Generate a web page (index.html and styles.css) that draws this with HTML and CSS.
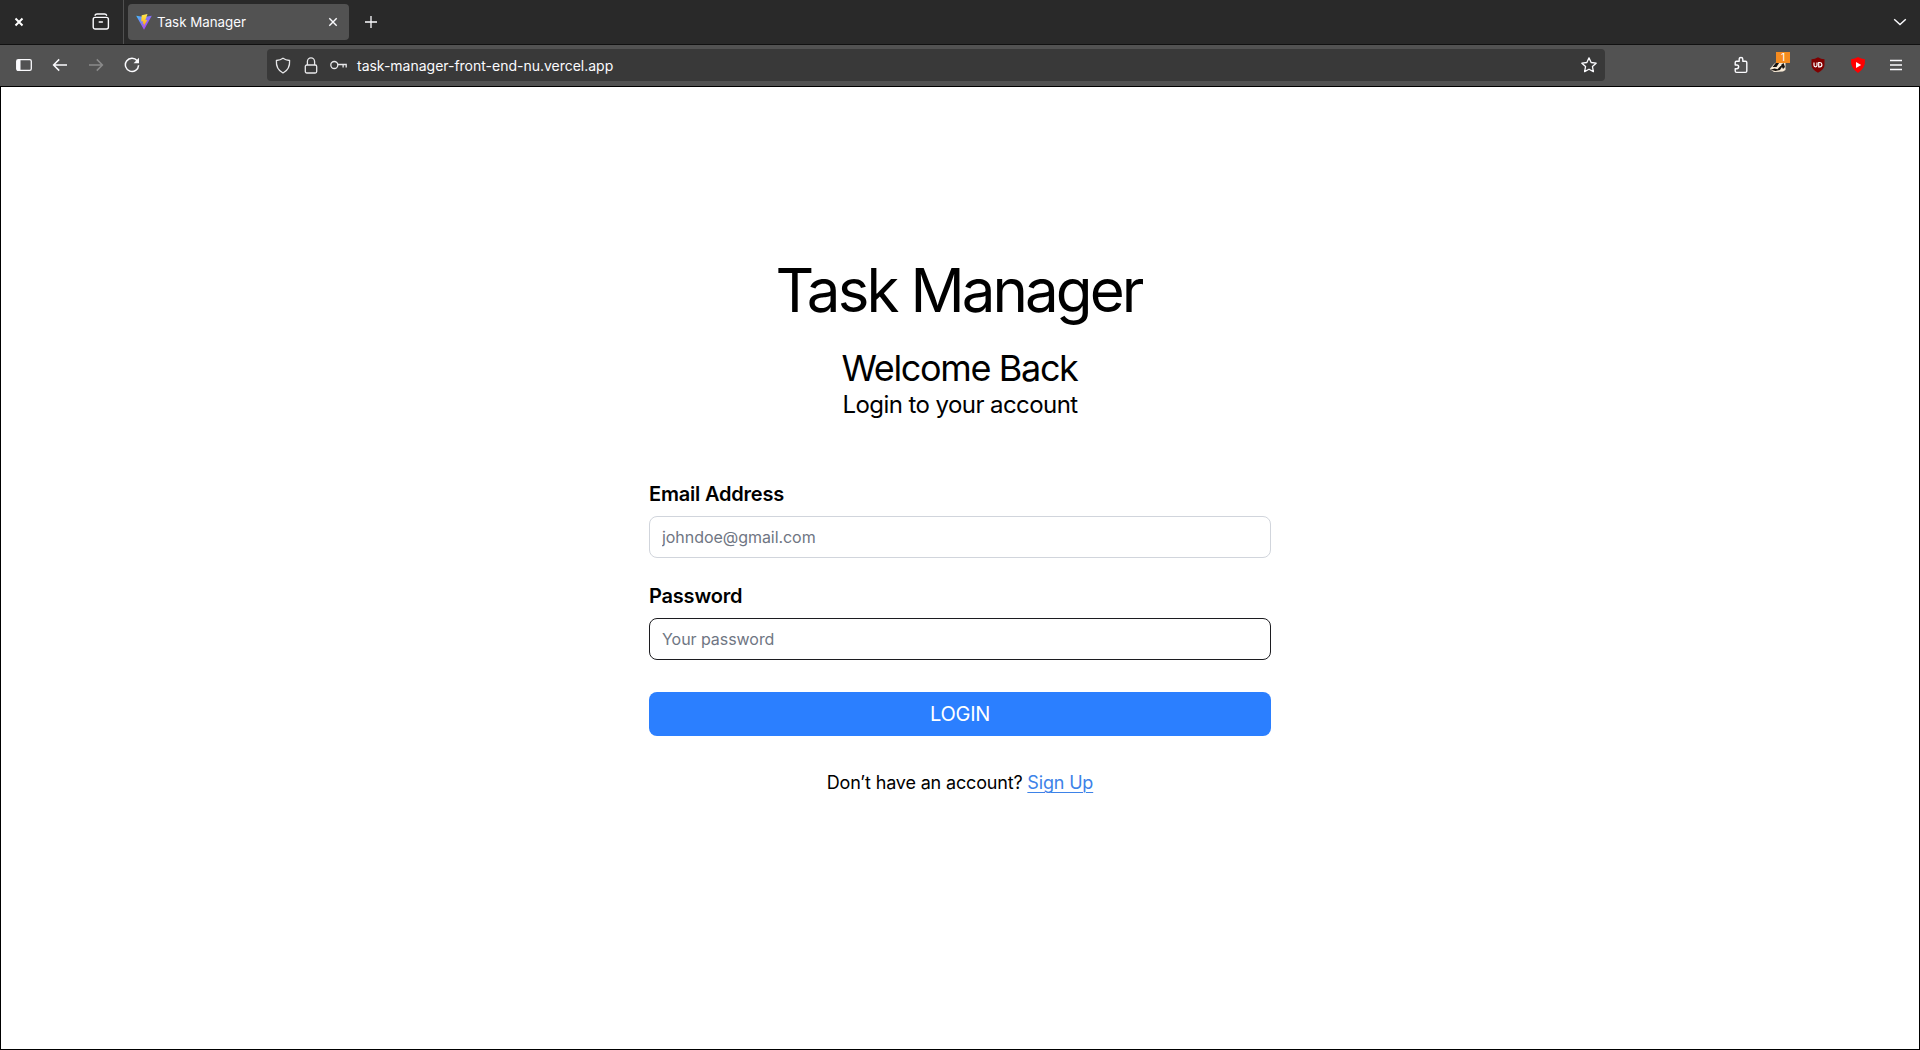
FILE: index.html
```html
<!DOCTYPE html>
<html lang="en">
<head>
<meta charset="utf-8">
<title>Task Manager</title>
<link rel="stylesheet" href="styles.css">
</head>
<body>
<div class="window">
  <header class="tabbar">
    <svg class="close-window" width="10" height="10" viewBox="0 0 10 10"><path d="M1.5 1.5l7 7m0-7l-7 7" fill="none" stroke="#fff" stroke-width="2"/></svg>
    <svg class="recent" width="18" height="18" viewBox="0 0 18 18" fill="none" stroke="#fbfbfe" stroke-width="1.4" stroke-linecap="round"><path d="M3 2.200Q3.400 1 5 1h7.600q1.600 0 2 1.200"/><rect x="1.200" y="4.400" width="15.200" height="11.600" rx="2"/><path d="M7.200 9h3.200"/></svg>
    <div class="divider"></div>
    <div class="tab">
      <svg width="16" height="16" viewBox="0 0 16 16"><defs><linearGradient id="va" x1="0" y1="0" x2="1" y2="1"><stop offset="0" stop-color="#41bffa"/><stop offset=".7" stop-color="#a44df6"/><stop offset="1" stop-color="#b040ff"/></linearGradient><linearGradient id="vb" x1="0" y1="0" x2="0" y2="1"><stop offset="0" stop-color="#ffe94f"/><stop offset="1" stop-color="#ffa30a"/></linearGradient></defs><path d="M.2 1.700L8 15.700l7.800-14L8.200 3z" fill="url(#va)"/><path d="M11.500.1L5.700 1.200l-.5 6.400 2-.4-.6 2.700 1.600-.4-.9 3.500 4-7-2 .3z" fill="url(#vb)"/></svg>
      <span class="tab-title">Task Manager</span>
      <svg class="tab-close" width="10" height="10" viewBox="0 0 10 10"><path d="M1.300 1.300l7.400 7.400m0-7.400L1.300 8.700" fill="none" stroke="#fbfbfe" stroke-width="1.400"/></svg>
    </div>
    <svg class="new-tab" width="14" height="14" viewBox="0 0 14 14"><path d="M7 1v12M1 7h12" fill="none" stroke="#fbfbfe" stroke-width="1.300"/></svg>
    <svg class="all-tabs" width="14" height="8" viewBox="0 0 14 8"><path d="M1.200 1.200L7 6.600l5.800-5.400" fill="none" stroke="#fbfbfe" stroke-width="1.400"/></svg>
  </header>
  <nav class="toolbar">
    <div class="nav-buttons">
      <svg width="16" height="16" viewBox="0 0 16 16"><rect x=".7" y="2.600" width="14.600" height="10.800" rx="1.600" fill="none" stroke="#fbfbfe" stroke-width="1.300"/><path d="M1 3h3.500v10H1z" fill="#fbfbfe"/></svg>
      <svg width="16" height="16" viewBox="0 0 16 16" fill="none" stroke="#fbfbfe" stroke-width="1.500"><path d="M15 8H1.800M7.200 2.400L1.600 8l5.600 5.600"/></svg>
      <svg width="16" height="16" viewBox="0 0 16 16" fill="none" stroke="#8a8a8a" stroke-width="1.500"><path d="M1 8h13.200M8.800 2.400L14.400 8l-5.600 5.600"/></svg>
      <svg width="16" height="16" viewBox="0 0 16 16"><path d="M13.200 3.800A6.600 6.600 0 1 0 14.600 8.200" fill="none" stroke="#fbfbfe" stroke-width="1.500"/><path d="M15 .8v5.400H9.600z" fill="#fbfbfe"/></svg>
    </div>
    <div class="urlbar">
      <svg width="16" height="17" viewBox="0 0 16 17" fill="none" stroke="#e8e8ea" stroke-width="1.300" stroke-linejoin="round"><path d="M8 1.200Q10.500 3 14.600 3.500C15 9.500 12 14 8 16 4 14 1 9.500 1.400 3.500Q5.500 3 8 1.200z"/></svg>
      <svg width="14" height="17" viewBox="0 0 14 17" fill="none" stroke="#e8e8ea" stroke-width="1.300"><rect x="1.300" y="8" width="11.400" height="8" rx="1.500"/><path d="M3.400 8V4.500a3.600 3.600 0 0 1 7.200 0V8"/></svg>
      <svg class="key" width="17" height="10" viewBox="0 0 17 10" fill="none" stroke="#e8e8ea" stroke-width="1.300"><circle cx="4.300" cy="5" r="3.500"/><path d="M7.800 4.500h8.400v3M13.100 4.500v3"/></svg>
      <span class="url">task-manager-front-end-nu.vercel.app</span>
      <svg class="star" width="16" height="16" viewBox="0 0 16 16" fill="none" stroke="#fbfbfe" stroke-width="1.300" stroke-linejoin="round"><path d="M8 .9l2.150 4.600 5 .650-3.700 3.450.950 5L8 12.200l-4.400 2.400.950-5L.850 6.150l5-.650z"/></svg>
    </div>
    <div class="extensions">
      <svg width="16" height="18" viewBox="0 0 16 18" fill="none" stroke="#fbfbfe" stroke-width="1.400" stroke-linejoin="round"><path d="M2.200 6.500q0-1.300 1.300-1.300h2.700V3.300a1.800 1.800 0 0 1 3.600 0v1.900h2.700q1.300 0 1.300 1.300v8.600q0 1.300-1.300 1.300h-9q-1.300 0-1.300-1.300v-2.400h1.600a1.800 1.800 0 0 0 0-3.700H2.200z"/></svg>
      <span class="badger">
        <svg width="18" height="18" viewBox="0 0 18 18"><path d="M.8 13L5 8l6-4.500L16.500 7v7l-2.500 1.500-9 .5z" fill="#f8ead6"/><path d="M3.500 11L8 5.500h3L7.500 11zM1.500 13.800l4-1.300 3 .8 3-3.300 2 .3-2.500 3.700-4.500 1zM12 9l2.500-2 1.500 4-2 2z" fill="#171310"/></svg>
        <span class="badge">1</span>
      </span>
      <span class="ublock"><svg width="16" height="16" viewBox="0 0 16 16"><path d="M8 .3Q11 2.300 14.500 2.300V8q0 4.500-6.500 7.700Q1.500 12.500 1.500 8V2.300Q5 2.300 8 .3z" fill="#800000"/><path d="M4 5.500v2.800q0 1.500 1.500 1.500T7 8.300V5.500M8.700 5.500v4.300h1.200q2-.1 2-2.100t-2-2.200z" fill="none" stroke="#fff" stroke-width="1.200"/></svg></span>
      <svg width="18" height="18" viewBox="0 0 18 18"><path d="M9 1Q12 2.800 16 3.300 16.600 12.500 9 17 1.400 12.500 2 3.300 6 2.800 9 1z" fill="#f00"/><path d="M7 6l5.200 3L7 12z" fill="#fff"/></svg>
      <svg width="14" height="14" viewBox="0 0 14 14"><path d="M1 2.500h12M1 7h12M1 11.500h12" stroke="#fbfbfe" stroke-width="1.300"/></svg>
    </div>
  </nav>
  <main class="page">
    <h1 class="title">Task Manager</h1>
    <h2 class="welcome">Welcome Back</h2>
    <p class="subtitle">Login to your account</p>
    <form class="form">
      <label class="label" for="email">Email Address</label>
      <input class="input" id="email" type="email" placeholder="johndoe@gmail.com">
      <label class="label" for="password">Password</label>
      <input class="input input-active" id="password" type="password" placeholder="Your password">
      <button class="login" type="button">LOGIN</button>
    </form>
    <p class="signup">Don’t have an account? <a class="link" href="#">Sign Up</a></p>
  </main>
</div>
</body>
</html>
```

FILE: styles.css
```css
* { box-sizing: border-box; margin: 0; padding: 0; }
body { font-family: Inter, sans-serif; color: #000; overflow: hidden; }
svg { display: block; flex: none; }
.window { display: flex; flex-direction: column; height: 1050px; }

.tabbar { display: flex; align-items: center; height: 45px; background: #292929; border-bottom: 1px solid #111; }
.close-window { margin-left: 14px; }
.recent { margin-left: 68px; }
.divider { width: 1px; height: 44px; margin-left: 13px; background: #505050; }
.tab { display: flex; align-items: center; width: 221px; height: 36px; margin-left: 4px; padding: 0 11px 0 8px; border-radius: 4px; background: #525252; }
.tab-title { margin-left: 5px; font-size: 13.33px; line-height: 16px; padding-bottom: 1px; color: #fbfbfe; white-space: nowrap; }
.tab-close { margin-left: auto; }
.new-tab { margin-left: 15px; }
.all-tabs { margin: 0 13px 0 auto; }

.toolbar { display: flex; align-items: center; height: 42px; padding-bottom: 1px; background: #525252; border-bottom: 1px solid #000; }
.nav-buttons { display: flex; gap: 20px; width: 267px; padding-left: 16px; }
.urlbar { display: flex; align-items: center; width: 1338px; height: 32px; padding: 0 8px; border-radius: 4px; background: #393939; }
.urlbar svg + svg { margin-left: 13px; }
.urlbar .key { margin-left: 12px; }
.url { margin-left: 10px; font-size: 14px; letter-spacing: -0.01px; color: #fbfbfe; }
.star { margin-left: auto; }
.extensions { display: flex; align-items: center; margin: 0 17px 0 auto; }
.badger { position: relative; margin: 0 1px 0 20px; }
.badge { position: absolute; left: 7px; top: -4px; width: 14px; height: 11px; background: #f58b1f; color: #fff; font-size: 10px; line-height: 11px; text-align: center; }
.ublock { margin-left: 22px; }
.ublock + svg { margin-left: 23px; }
.ublock + svg + svg { margin-left: 22px; }

.page { display: flex; flex: 1; flex-direction: column; align-items: center; padding-top: 173px; border: solid #000; border-width: 0 1px 1px; background: #fff; }
.title { padding-right: 3px; font-size: 60px; line-height: 60px; font-weight: 400; letter-spacing: -2.9px; }
.welcome { margin-top: 28px; padding-right: 1px; font-size: 36px; line-height: 40px; font-weight: 400; letter-spacing: -1.35px; }
.subtitle { margin-top: 1px; font-size: 24px; line-height: 32px; letter-spacing: -0.57px; }
.form { display: flex; flex-direction: column; width: 622px; margin-top: 59px; }
.label { margin-bottom: 8px; font-size: 20px; line-height: 28px; font-weight: 600; letter-spacing: -0.2px; }
.input { height: 42px; margin-bottom: 24px; padding: 0 12px; border: 1px solid #d1d5dc; border-radius: 8px; background: #fff; font: 16px/24px Inter, sans-serif; letter-spacing: -0.05px; }
.input::placeholder { color: #6f7683; opacity: 1; }
.input-active { margin-bottom: 32px; border-color: #1c1c20; }
.login { height: 44px; border: 0; border-radius: 8px; background: #2b7fff; color: #fff; font: 20px/28px Inter, sans-serif; letter-spacing: -0.25px; }
.signup { margin-top: 33px; font-size: 18px; line-height: 28px; letter-spacing: -0.17px; }
.link { color: #3d82e8; text-decoration: underline; text-decoration-thickness: 1px; text-underline-offset: 3px; text-decoration-skip-ink: auto; }
```
